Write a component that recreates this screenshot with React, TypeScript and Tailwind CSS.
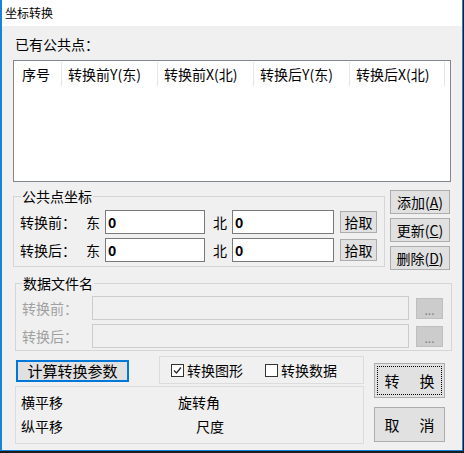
import type { ReactNode } from "react";

const cjk = "font-['Noto_Sans_CJK_SC','Noto_Sans',sans-serif]";

type Col = { title: string; w: string; pl: string };

const columns: Col[] = [
  { title: "序号", w: "w-[48px]", pl: "pl-[8px]" },
  { title: "转换前Y(东)", w: "w-[96px]", pl: "pl-[6px]" },
  { title: "转换前X(北)", w: "w-[96px]", pl: "pl-[6px]" },
  { title: "转换后Y(东)", w: "w-[96px]", pl: "pl-[6px]" },
  { title: "转换后X(北)", w: "w-[95px]", pl: "pl-[6px]" },
];

function WinButton({ children, className = "" }: { children: ReactNode; className?: string }) {
  return (
    <button className={`flex items-center justify-center bg-[#e1e1e1] border border-[#adadad] ${className}`}>
      {children}
    </button>
  );
}

function ValueInput({ w }: { w: string }) {
  return (
    <div className={`${w} h-[24px] border border-[#7a7a7a] bg-white flex items-center pl-[2px] font-bold`}>
      0
    </div>
  );
}

function Checkbox({ checked, label, className = "" }: { checked: boolean; label: string; className?: string }) {
  return (
    <div className={`flex items-center ${className}`}>
      <span className="w-[13px] h-[13px] border border-[#333333] bg-white flex items-center justify-center">
        {checked && (
          <svg width="11" height="11" viewBox="0 0 11 11">
            <polyline points="2,5.5 4.5,8 9,2.5" fill="none" stroke="#333333" strokeWidth="1.4" />
          </svg>
        )}
      </span>
      <span className="ml-[3px]">{label}</span>
    </div>
  );
}

export default function App() {
  return (
    <div className={`w-[464px] h-[453px] bg-[#1b1b1b] ${cjk} text-[14px] leading-[16px] text-black`}>
      <div className="w-[463px] h-[451px] flex flex-col bg-[#f0f0f0] border-l-2 border-r border-b border-[#1883d7]">
        <div className="h-[26px] shrink-0 bg-white flex items-center pl-[3px] text-[12px]">坐标转换</div>

        <div className="flex flex-col">
          {/* 已有公共点 list */}
          <div className="mt-[10px] ml-[13px] h-[16px]">已有公共点：</div>
          <div className="mt-[8px] ml-[11px] w-[438px] h-[122px] border border-[#828790] bg-white">
            <div className="flex h-[26px]">
              {columns.map((c) => (
                <div key={c.title} className={`${c.w} ${c.pl} h-[24px] mt-[1px] flex items-center border-r border-[#e5e5e5]`}>
                  {c.title}
                </div>
              ))}
            </div>
          </div>

          {/* 公共点坐标 */}
          <div className="flex items-start mt-[6px] ml-[11px]">
            <fieldset className="w-[372px] border border-[#d5d5d5] pb-[4px]">
              <legend className="ml-[7px] px-[1px] h-[16px]">公共点坐标</legend>
              <div className="pt-[6px] flex flex-col gap-[4px]">
                {["转换前：", "转换后："].map((t) => (
                  <div key={t} className="flex items-center h-[24px] pl-[6px]">
                    <span className="w-[66px]">{t}</span>
                    <span className="w-[19px]">东</span>
                    <ValueInput w="w-[100px]" />
                    <span className="w-[27px] pl-[8px]">北</span>
                    <ValueInput w="w-[102px]" />
                    <WinButton className="ml-[6px] w-[37px] h-[22px]">拾取</WinButton>
                  </div>
                ))}
              </div>
            </fieldset>
            <div className="ml-[5px] mt-[2px] flex flex-col gap-[4px]">
              <WinButton className="w-[60px] h-[24px]">添加(<u>A</u>)</WinButton>
              <WinButton className="w-[60px] h-[24px]">更新(<u>C</u>)</WinButton>
              <WinButton className="w-[60px] h-[24px]">删除(<u>D</u>)</WinButton>
            </div>
          </div>

          {/* 数据文件名 */}
          <fieldset className="mt-[5px] ml-[13px] w-[437px] border border-[#d5d5d5] pb-[2px]">
            <legend className="ml-[6px] px-[1px] h-[16px]">数据文件名</legend>
            <div className="pt-[5px] flex flex-col gap-[4px]">
              {["转换前：", "转换后："].map((t) => (
                <div key={t} className="flex items-center h-[24px] pl-[6px]">
                  <span className="w-[70px] text-[#a0a0a0]">{t}</span>
                  <div className="w-[317px] h-[24px] border border-[#cccccc] bg-[#f0f0f0]" />
                  <div className="ml-[7px] w-[27px] h-[21px] bg-[#cccccc] border border-[#bfbfbf] flex items-center justify-center text-[#838383] text-[12px] leading-[12px] pt-[3px]">
                    ...
                  </div>
                </div>
              ))}
            </div>
          </fieldset>

          {/* bottom area */}
          <div className="flex mt-[5px] ml-[13px]">
            <div className="w-[349px] flex flex-col">
              <div className="flex items-start h-[28px]">
                <button className="ml-[1px] mt-[4px] w-[113px] h-[22px] border-2 border-[#0078d7] bg-[#e1e1e1] text-[15px] flex items-center justify-center">
                  计算转换参数
                </button>
                <div className="ml-[30px] w-[205px] h-[28px] border border-[#dcdcdc] flex items-center pl-[11px]">
                  <Checkbox checked label="转换图形" />
                  <Checkbox checked={false} label="转换数据" className="ml-[22px]" />
                </div>
              </div>
              <div className="mt-[2px] h-[58px] border border-[#dcdcdc] pt-[7px] pl-[5px] flex flex-col gap-[8px]">
                <div className="flex h-[16px]">
                  <span className="w-[157px]">横平移</span>
                  <span>旋转角</span>
                </div>
                <div className="flex h-[16px]">
                  <span className="w-[175px]">纵平移</span>
                  <span>尺度</span>
                </div>
              </div>
            </div>
            <div className="ml-[10px] flex flex-col">
              <WinButton className="mt-[7px] w-[71px] h-[35px] gap-[20px] text-[15px] outline-1 outline-dotted outline-black outline-offset-[-4px]">
                <span>转</span>
                <span>换</span>
              </WinButton>
              <WinButton className="mt-[9px] w-[71px] h-[35px] gap-[20px] text-[15px]">
                <span>取</span>
                <span>消</span>
              </WinButton>
            </div>
          </div>
        </div>
      </div>
    </div>
  );
}
